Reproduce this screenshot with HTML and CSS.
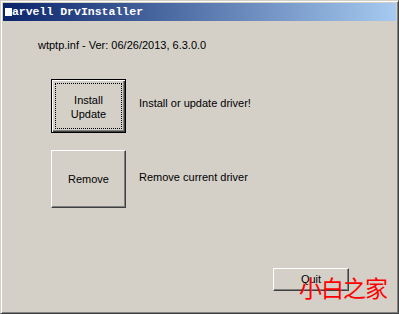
FILE: index.html
```html
<!DOCTYPE html>
<html lang="en">
<head>
  <meta charset="UTF-8">
  <title>Marvell DrvInstaller</title>
  <link rel="stylesheet" href="styles.css">
</head>
<body>
  <div class="window">
    <div class="titlebar"><span class="glyph">M</span>arvell DrvInstaller</div>

    <div class="content">
      <p class="version">wtptp.inf - Ver: 06/26/2013, 6.3.0.0</p>

      <div class="row row-install">
        <button class="btn btn-big btn-default"><span class="focus">Install<br>Update</span></button>
        <span class="label">Install or update driver!</span>
      </div>

      <div class="row row-remove">
        <button class="btn btn-big"><span class="plain">Remove</span></button>
        <span class="label">Remove current driver</span>
      </div>

      <div class="footer">
        <button class="btn btn-quit"><span class="plain">Quit</span></button>
      </div>
    </div>

    <!-- watermark over the corner -->
    <div class="watermark">小白之家</div>
  </div>
</body>
</html>
```

FILE: styles.css
```css
* {
  margin: 0;
  padding: 0;
  box-sizing: border-box;
}

body {
  width: 399px;
  height: 314px;
  overflow: hidden;
  background: #d4d0c8;
  font-family: 'Liberation Sans', Arial, sans-serif;
  font-size: 11px;
  color: #000;
}

/* Ventana clasica */
.window {
  position: relative;
  width: 399px;
  height: 314px;
  background: #d4d0c8;
  border: 1px solid;
  border-color: #d4d0c8 #404040 #404040 #d4d0c8;
  box-shadow: inset 1px 1px 0 #fff, inset -1px -1px 0 #808080;
  padding: 2px;
  display: flex;
  flex-direction: column;
}

.titlebar {
  height: 18px;
  background: linear-gradient(90deg, #0a246a, #a6caf0);
  color: #fff;
  font-family: 'Liberation Mono', 'Courier New', monospace;
  font-weight: bold;
  font-size: 11.5px;
  line-height: 18px;
  padding-left: 2px;
  white-space: pre;
}

.glyph {
  display: inline-block;
  line-height: 8px;
  background: #fff;
  color: #fff;
  vertical-align: 0;
}

.content {
  flex: 1;
  display: flex;
  flex-direction: column;
  padding: 0 0 0 48px;
}

.version {
  margin: 17px 0 0 -13px;
  line-height: 14px;
}

.row {
  display: flex;
  align-items: center;
}

.row-install {
  margin-top: 27px;
}

.row-remove {
  margin-top: 17px;
}

.label {
  margin-left: 13px;
}

.row-install .label {
  margin-bottom: 6px;
}

.row-remove .label {
  margin-bottom: 4px;
}

/* Botones */
.btn {
  font-family: inherit;
  font-size: 11px;
  color: #000;
  background: #d4d0c8;
  border: 1px solid;
  border-color: #fff #404040 #404040 #fff;
  box-shadow: inset -1px -1px 0 #808080;
  display: flex;
  align-items: center;
  justify-content: center;
}

.btn-big {
  width: 75px;
  height: 58px;
}

.btn-default {
  height: 54px;
  border: 1px solid #000;
  box-shadow: inset 1px 1px 0 #fff, inset -1px -1px 0 #404040, inset -2px -2px 0 #808080;
  padding: 3px;
}

.focus {
  width: 100%;
  height: 100%;
  border: 1px dotted #000;
  display: flex;
  align-items: center;
  justify-content: center;
  text-align: center;
  line-height: 14px;
  padding-top: 1px;
}

.plain {
  line-height: 13px;
}

.row-remove .plain {
  padding-top: 1px;
}

.footer {
  display: flex;
  justify-content: flex-end;
  margin-top: auto;
  padding: 0 47px 20px 0;
}

.btn-quit {
  width: 76px;
  height: 23px;
}

.watermark {
  position: absolute;
  left: 298px;
  top: 271px;
  color: #ff0000;
  font-family: 'Noto Sans CJK SC', sans-serif;
  font-size: 23px;
  line-height: 30px;
  letter-spacing: -1px;
}
```
